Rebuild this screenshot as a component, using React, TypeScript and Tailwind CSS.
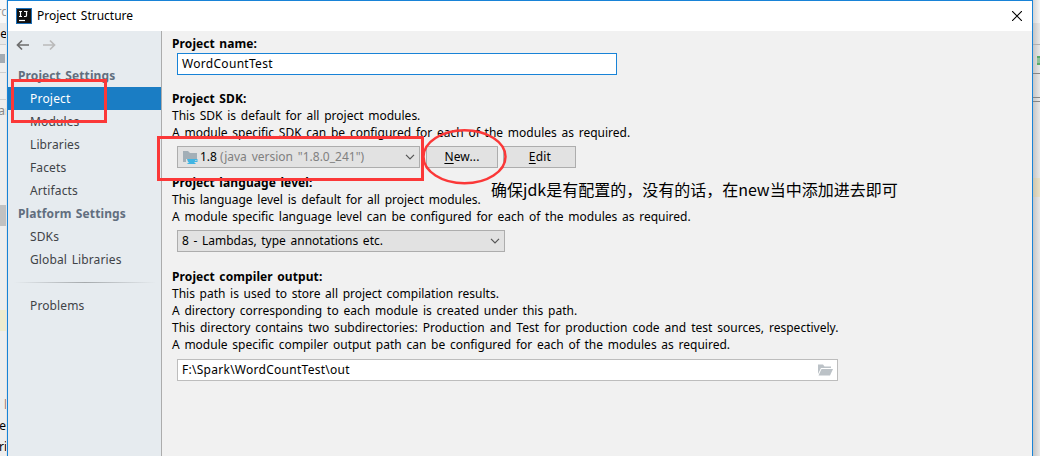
import type { ReactNode } from "react";

const body = "h-[17px] text-[12px] leading-[17px] text-black whitespace-pre";

function Heading({ children, className = "" }: { children: ReactNode; className?: string }) {
  return <h3 className={`${body} font-bold tracking-[0.1px] [word-spacing:1.2px] ${className}`}>{children}</h3>;
}

function Line({ children, spacing = "[word-spacing:1.63px]" }: { children: ReactNode; spacing?: string }) {
  return <p className={`${body} ${spacing}`}>{children}</p>;
}

function Chevron() {
  return (
    <svg width="10" height="6" viewBox="0 0 10 6" className="ml-auto shrink-0" fill="none" stroke="#555" strokeWidth="1.2">
      <path d="M1 0.800 5 4.800 9 0.800" />
    </svg>
  );
}

function SdkIcon() {
  return (
    <svg width="16" height="16" viewBox="0 0 16 16" className="shrink-0">
      <path d="M1 2h5l2 2h7v6H4v3H1z" fill="#a3afb7" />
      <path d="M5 10h10.500v3H13Q12 14.500 10.500 14.500H8Q5.500 13.500 5 10z" fill="#41b5e3" />
      <path d="M13.300 11h1.200v1h-1.200z" fill="#e2e2e2" />
      <path d="M5.500 14h8v1h-8z" fill="#41b5e3" />
    </svg>
  );
}

function Sidebar() {
  const projectItems = ["Modules", "Libraries", "Facets", "Artifacts"];
  const platformItems = ["SDKs", "Global Libraries"];
  const row = "h-[23px] pl-[22px] text-[12px] leading-[23px] tracking-[0.12px] [word-spacing:1.4px] text-[#3f4347] whitespace-pre";
  const group = "h-[23px] pl-[10px] text-[12px] leading-[24px] font-bold tracking-[0.1px] [word-spacing:1.2px] text-[#616e7e] whitespace-pre";

  return (
    <nav className="w-[154px] shrink-0 border-r border-[#acacac] bg-[#e6ebef]">
      <div className="flex h-[33px] gap-[14px] pl-2 pt-[8px]">
        <svg width="13" height="12" viewBox="0 0 13 12" fill="none" stroke="#6e6e6e" strokeWidth="1.7">
          <path d="M13 6H1.500M6 1.500 1.500 6 6 10.500" />
        </svg>
        <svg width="13" height="12" viewBox="0 0 13 12" fill="none" stroke="#bababa" strokeWidth="1.7">
          <path d="M0 6h11.500M7 1.500 11.500 6 7 10.500" />
        </svg>
      </div>
      <div className={group}>Project Settings</div>
      <div className="h-[23px] bg-[#1a7dc4] pl-[22px] text-[12px] leading-[23px] tracking-[0.2px] text-white">Project</div>
      {projectItems.map((label) => (
        <div key={label} className={row}>{label}</div>
      ))}
      <div className={group}>Platform Settings</div>
      {platformItems.map((label) => (
        <div key={label} className={row}>{label}</div>
      ))}
      <div className="mt-[11px] ml-[6px] h-px w-[142px] bg-linear-to-r from-transparent via-[#a5a9ac] to-transparent" />
      <div className="pt-[11px]">
        <div className={row}>Problems</div>
      </div>
    </nav>
  );
}

function ProjectPage() {
  const combo = "flex h-[22px] items-center border border-[#adadad] bg-[#e2e2e2] pl-1 text-[12px] text-black whitespace-pre";
  const button = "h-[22px] border border-[#adadad] bg-[#e2e2e2] text-center text-[12px] leading-[20px] text-black";

  return (
    <main className="flex-1 bg-[#f1f1f1] pl-[10px] pt-[4px]">
      <Heading>Project name:</Heading>
      <div className="ml-[5px] mt-px h-[22px] w-[440px] border border-[#1883d7] bg-white pl-1 text-[12px] leading-[20px] tracking-[0.3px] text-black">
        WordCountTest
      </div>

      <Heading className="mt-[15px]">Project SDK:</Heading>
      <Line>This SDK is default for all project modules.</Line>
      <Line>A module specific SDK can be configured for each of the modules as required.</Line>
      <div className="ml-[5px] mt-[5px] flex">
        <div className={`${combo} w-[243px] pr-1`}>
          <SdkIcon />
          <span className="ml-[2px]">1.8 </span>
          <span className="[word-spacing:1.7px] text-[#808080]">(java version "1.8.0_241")</span>
          <Chevron />
        </div>
        <button className={`${button} ml-[6px] w-[72px] tracking-[0.15px]`}>
          <span className="underline underline-offset-2">N</span>ew...
        </button>
        <button className={`${button} ml-[5px] w-[73px] pl-px tracking-[0.2px]`}>
          <span className="underline underline-offset-2">E</span>dit
        </button>
      </div>

      <Heading className="mt-[6px]">Project language level:</Heading>
      <Line>This language level is default for all project modules.</Line>
      <Line>A module specific language level can be configured for each of the modules as required.</Line>
      <div className={`${combo} ml-[5px] mt-[5px] w-[328px] pr-[4px]`}>
        <span className="[word-spacing:1.5px]">8 - Lambdas, type annotations etc.</span>
        <Chevron />
      </div>

      <Heading className="mt-[16px]">Project compiler output:</Heading>
      <Line spacing="[word-spacing:1.5px]">This path is used to store all project compilation results.</Line>
      <Line spacing="[word-spacing:1.7px]">A directory corresponding to each module is created under this path.</Line>
      <Line spacing="[word-spacing:1.9px]">This directory contains two subdirectories: Production and Test for production code and test sources, respectively.</Line>
      <Line spacing="[word-spacing:1.6px]">A module specific compiler output path can be configured for each of the modules as required.</Line>
      <div className="ml-[5px] mt-[6px] flex h-[22px] w-[661px] items-center border border-[#bdbdbd] bg-white pl-1 pr-[4px] text-[12px] tracking-[0.27px] text-black">
        F:\Spark\WordCountTest\out
        <svg width="16" height="12" viewBox="0 0 16 12" className="ml-auto" fill="#bcc2c7">
          <path d="M1 0.500h5l1.500 2H14V4H4L1 10z" />
          <path d="M4.500 5H16l-3 6.500H1.500z" />
        </svg>
      </div>
    </main>
  );
}

function LeftBackdrop() {
  const text = "absolute text-[12px] leading-[16px]";
  return (
    <div className="relative w-[7px] shrink-0 overflow-hidden border-r border-[#e4e4e4] bg-[#eeeeee]">
      <div className="h-[23px] bg-[#f8f8f8]" />
      <div className="h-[21px] bg-[#e9e9e9]" />
      <div className="h-[29px] border-y border-[#cfcfcf] bg-[#efefef] pt-[9px]">
        <div className="h-[9px] w-[5px] bg-[#a4abb2]" />
      </div>
      <div className="h-[27px] border-b border-[#cfcfcf]" />
      <div className="mt-[105px] h-[21px] bg-[#c1c1c1]" />
      <div className="mt-[84px] h-[21px] bg-[#eeeccf]" />
      <span className={`${text} -right-px top-[4px] text-[#999999]`}>rc</span>
      <span className={`${text} -right-px top-[26px] text-black`}>de</span>
      <span className={`${text} -right-[4px] top-[103px] text-[#888888]`}>ar</span>
      <span className={`${text} -right-px top-[397px] text-[#a08078]`}>l</span>
      <span className={`${text} right-0 top-[418px] text-black`}>e</span>
      <span className={`${text} -right-px top-[439px] text-black`}>ri</span>
    </div>
  );
}

function RightBackdrop() {
  return (
    <div className="w-[7px] shrink-0 overflow-hidden bg-linear-to-r from-[#c6c6c6] to-[#e8e8e8]">
      <div className="h-[23px] bg-linear-to-r from-[#d5d5d5] to-[#f5f5f5]" />
      <div className="h-[22px] border-b border-[#b0b0b0]" />
      <div className="flex h-[29px] justify-end border-b border-[#858585] pt-[11px]">
        <div className="h-[9px] w-[3px] border-y-2 border-[#59a869] bg-[#8fc29a]" />
      </div>
      <div className="h-[24px] border-b border-[#858585]" />
      <div className="h-[4px] border-b border-[#858585]" />
      <div className="mt-[76px] h-[19px] bg-linear-to-r from-[#cdc6b0] to-[#e9e1c6]" />
    </div>
  );
}

export default function App() {
  return (
    <div className="relative flex h-[456px] w-[1040px] overflow-hidden font-['Noto_Sans','Noto_Sans_CJK_SC',sans-serif]">
      <LeftBackdrop />
      <div className="flex w-[1026px] shrink-0 flex-col border-x border-t border-[#1883d7]">
        <header className="flex h-[30px] shrink-0 items-center bg-white pl-2 pr-[10px]">
          <svg width="16" height="16" viewBox="0 0 16 16" className="shrink-0">
            <rect x="0.500" y="0.500" width="15" height="15" fill="#111" stroke="#1c6fb8" />
            <path d="M3 3.500h3M4.500 3.500v5M3 8.500h3M8 3.500h3.500M10.500 3.500v4Q10.500 8.500 9.500 8.500H8" fill="none" stroke="#fff" strokeWidth="1.200" />
            <path d="M3 12.500h6" stroke="#fff" strokeWidth="1.200" />
          </svg>
          <span className="ml-[5px] text-[12px] [word-spacing:1.5px] text-black">Project Structure</span>
          <svg width="10" height="10" viewBox="0 0 10 10" className="ml-auto" stroke="#000" strokeWidth="1.1">
            <path d="M0 0 10 10M10 0 0 10" />
          </svg>
        </header>
        <div className="flex flex-1">
          <Sidebar />
          <ProjectPage />
        </div>
      </div>
      <RightBackdrop />

      {/* annotations over the dialog */}
      <div className="absolute left-[11px] top-[79px] h-[44px] w-[96px] border-3 border-[#fb3838]" />
      <div className="absolute left-[157px] top-[136px] h-[45px] w-[267px] border-3 border-[#fb3838]" />
      <svg className="absolute left-[421px] top-[128px]" width="87" height="57" viewBox="0 0 87 57" fill="none">
        <ellipse cx="43.500" cy="28.700" rx="41" ry="26.500" stroke="#fb3838" strokeWidth="2.500" />
      </svg>
      <div className="absolute left-[491px] top-[177px] font-['Noto_Sans_CJK_SC',sans-serif] text-[16px] leading-[24px] text-black whitespace-nowrap">
        确保jdk是有配置的，没有的话，在new当中添加进去即可
      </div>
    </div>
  );
}
